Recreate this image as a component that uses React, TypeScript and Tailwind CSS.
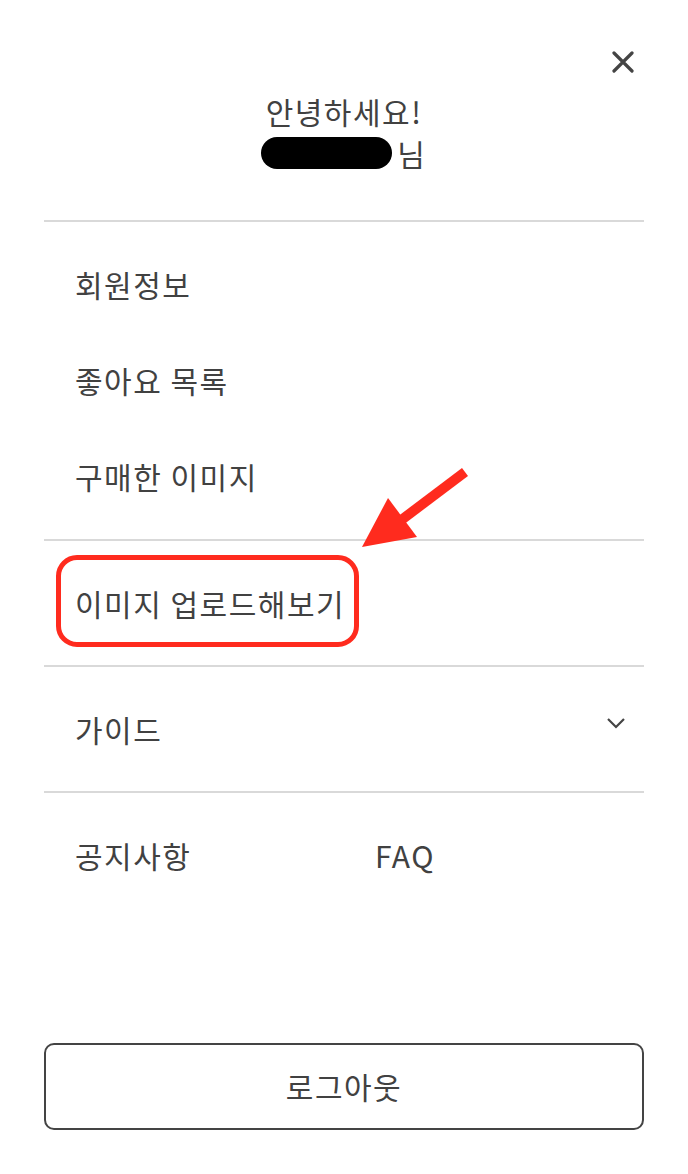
import React from "react";

const font = { fontFamily: '"Noto Sans CJK KR", "Noto Sans", sans-serif' };

function Divider() {
  return <div className="h-[2px] w-full bg-[#d9d9d9]" />;
}

export default function App() {
  return (
    <div
      className="relative flex h-[1174px] w-[688px] flex-col bg-white px-[44px] text-[#414141] tracking-[1.5px]"
      style={font}
    >
      {/* header */}
      <div className="flex justify-end pt-[51px] pr-[10px]">
        <button className="flex h-[22px] w-[22px] items-center justify-center">
          <svg width="22" height="22" viewBox="0 0 22 22">
            <path d="M2 2 L20 20 M20 2 L2 20" stroke="#444" strokeWidth="3.2" strokeLinecap="round" />
          </svg>
        </button>
      </div>
      <div className="mt-[17px] flex flex-col items-center pb-[46px] text-[30px] leading-[42px]">
        <div>안녕하세요!</div>
        <div className="flex items-center pr-[2px]">
          <span className="mr-[5px] inline-block h-[32px] w-[131px] rounded-full bg-black" />
          <span className="tracking-normal">님</span>
        </div>
      </div>
      <Divider />
      <div className="flex flex-col pt-[14px] pb-[15px] text-[30px]">
        <div className="flex h-[96px] items-center pl-[31px]">회원정보</div>
        <div className="flex h-[96px] items-center pl-[31px]">좋아요 목록</div>
        <div className="flex h-[96px] items-center pl-[31px]">구매한 이미지</div>
      </div>
      <Divider />
      <div className="flex h-[124px] items-center pl-[31px] text-[30px]">이미지 업로드해보기</div>
      <Divider />
      <div className="flex h-[124px] items-center justify-between pl-[31px] pr-[18px] text-[30px]">
        <span>가이드</span>
        <svg width="20" height="12" viewBox="0 0 20 12" className="-mt-[12px]">
          <path d="M2 2 L10 10 L18 2" fill="none" stroke="#444" strokeWidth="2.2" />
        </svg>
      </div>
      <Divider />
      <div className="grid grid-cols-2 pt-[40px] text-[30px] leading-[44px]">
        <div className="pl-[31px]">공지사항</div>
        <div className="pl-[31px]">FAQ</div>
      </div>
      <div className="mt-auto mb-[44px] flex h-[87px] items-center justify-center rounded-[10px] border-[2px] border-[#444] text-[30px]">
        로그아웃
      </div>

      {/* annotation overlay */}
      <div className="pointer-events-none absolute left-[56px] top-[555px] h-[92px] w-[303px] rounded-[21px] border-[5px] border-[#ff2b1e]" />
      <svg
        className="pointer-events-none absolute left-0 top-0"
        width="688"
        height="1174"
        viewBox="0 0 688 1174"
      >
        <path d="M465 472 L400 521" stroke="#ff2b1e" strokeWidth="10" strokeLinecap="butt" />
        <polygon points="362,547 388,498 417,537" fill="#ff2b1e" />
      </svg>
    </div>
  );
}
